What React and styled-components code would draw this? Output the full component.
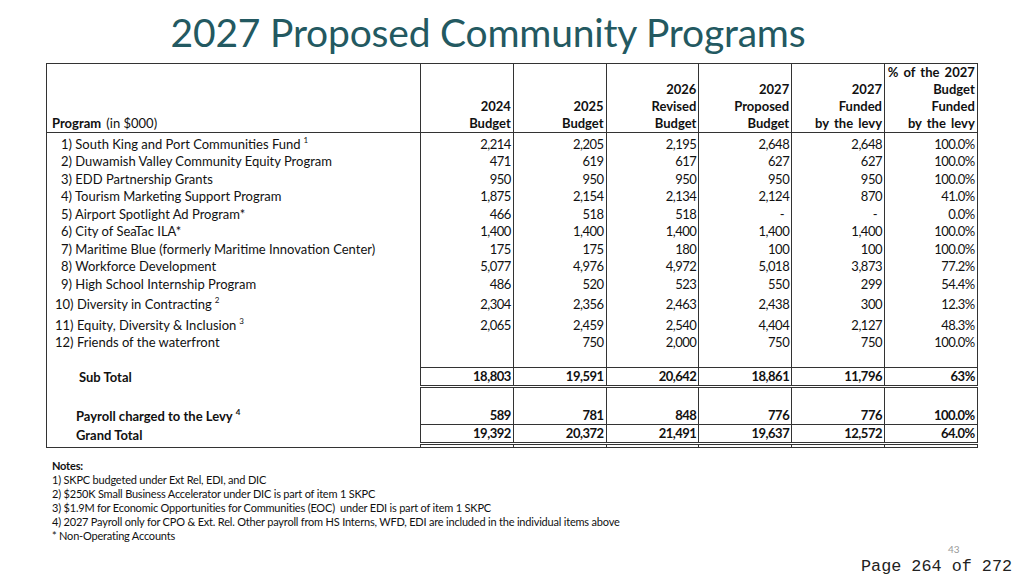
import React from "react";
import styled, { createGlobalStyle } from "styled-components";

const Global = createGlobalStyle`
  html, body { margin: 0; padding: 0; background: #fff; }
`;

const Page = styled.div`
  position: relative;
  width: 1024px;
  height: 576px;
  overflow: hidden;
  background: #fff;
  font-family: Lato, "Open Sans", sans-serif;
  color: #111;
`;

const Title = styled.h1`
  margin: 0;
  padding: 9px 48px 0 0;
  height: 54px;
  box-sizing: border-box;
  font-family: Lato, "Open Sans", sans-serif;
  font-weight: 400;
  font-size: 39px;
  line-height: 46px;
  text-align: center;
  color: #235961;
  letter-spacing: -0.2px;
`;

const Table = styled.table`
  margin: 9px 0 0 46px;
  width: 931px;
  table-layout: fixed;
  border-collapse: collapse;
  border: 1px solid #333;
  font-size: 13px;
`;

const HeadCell = styled.th`
  padding: 0 2px 0 ${(p) => (p.$first ? 5 : 0)}px;
  height: 68px;
  vertical-align: bottom;
  text-align: ${(p) => (p.$first ? "left" : "right")};
  font-weight: 700;
  line-height: 17px;
  word-spacing: 2px;
  border-right: 1px solid #333;
  border-bottom: 1px solid #333;
  white-space: nowrap;
`;

const Light = styled.span`
  font-weight: 400;
  word-spacing: 0;
`;

const Row = styled.tr`
  height: ${(p) => p.$h}px;
`;

const Label = styled.td`
  padding: 0 0 0 ${(p) => p.$indent}px;
  vertical-align: bottom;
  line-height: 17px;
  white-space: nowrap;
  font-weight: ${(p) => (p.$bold ? 700 : 400)};
  border-right: 1px solid #333;
`;

const rules = {
  none: "none",
  single: "1px solid #333",
  double: "3px double #333",
};

const Num = styled.td`
  padding: 0 2px 0 0;
  vertical-align: bottom;
  text-align: right;
  line-height: 17px;
  white-space: nowrap;
  letter-spacing: -0.5px;
  font-weight: ${(p) => (p.$bold ? 700 : 400)};
  border-right: 1px solid #333;
  border-bottom: ${(p) => rules[p.$rule || "none"]};
`;

const Dash = styled.span`
  padding-right: 5px;
`;

const Sup = styled.sup`
  font-size: 8px;
  line-height: 0;
  vertical-align: 6px;
  margin-left: 3px;
`;

const Notes = styled.div`
  margin: 11px 0 0 52px;
  font-size: 11px;
  line-height: 14px;
  letter-spacing: -0.2px;
  color: #111;
`;

const NotesHead = styled.div`
  font-weight: 700;
`;

const PageNo = styled.div`
  position: absolute;
  left: 948px;
  top: 544px;
  font-size: 10px;
  line-height: 11px;
  color: #999;
`;

const Stamp = styled.div`
  position: absolute;
  left: 861px;
  top: 558px;
  font-family: "Liberation Mono", "Courier New", monospace;
  font-size: 16.8px;
  line-height: 17px;
  color: #222;
`;

const rows = [
  ["1) South King and Port Communities Fund", "1", ["2,214", "2,205", "2,195", "2,648", "2,648", "100.0%"], 20],
  ["2) Duwamish Valley Community Equity Program", null, ["471", "619", "617", "627", "627", "100.0%"], 17.5],
  ["3) EDD Partnership Grants", null, ["950", "950", "950", "950", "950", "100.0%"], 17.5],
  ["4) Tourism Marketing Support Program", null, ["1,875", "2,154", "2,134", "2,124", "870", "41.0%"], 17.5],
  ["5) Airport Spotlight Ad Program*", null, ["466", "518", "518", "-", "-", "0.0%"], 17.5],
  ["6) City of SeaTac ILA*", null, ["1,400", "1,400", "1,400", "1,400", "1,400", "100.0%"], 17.5],
  ["7) Maritime Blue (formerly Maritime Innovation Center)", null, ["175", "175", "180", "100", "100", "100.0%"], 17.5],
  ["8) Workforce Development", null, ["5,077", "4,976", "4,972", "5,018", "3,873", "77.2%"], 17.5],
  ["9) High School Internship Program", null, ["486", "520", "523", "550", "299", "54.4%"], 17.5],
  ["10) Diversity in Contracting", "2", ["2,304", "2,356", "2,463", "2,438", "300", "12.3%"], 20.5],
  ["11) Equity, Diversity & Inclusion", "3", ["2,065", "2,459", "2,540", "4,404", "2,127", "48.3%"], 20.5],
  ["12) Friends of the waterfront", null, ["", "750", "2,000", "750", "750", "100.0%"], 17.5],
];

const heads = [
  ["2024", "Budget"],
  ["2025", "Budget"],
  ["2026", "Revised", "Budget"],
  ["2027", "Proposed", "Budget"],
  ["2027", "Funded", "by the levy"],
  ["% of the 2027", "Budget", "Funded", "by the levy"],
];

function NumCells({ values, bold, rule }) {
  return values.map((v, i) => (
    <Num key={i} $bold={bold} $rule={rule}>
      {v === "-" ? <Dash>-</Dash> : v}
    </Num>
  ));
}

const blank = ["", "", "", "", "", ""];

export default function App() {
  return (
    <Page>
      <Global />
      <Title>2027 Proposed Community Programs</Title>
      <Table>
        <colgroup>
          <col style={{ width: 374 }} />
          {heads.map((_, i) => (
            <col key={i} style={{ width: 92.8 }} />
          ))}
        </colgroup>
        <thead>
          <tr>
            <HeadCell $first>
              Program <Light>(in $000)</Light>
            </HeadCell>
            {heads.map((h, i) => (
              <HeadCell key={i}>
                {h.map((line, j) => (
                  <React.Fragment key={j}>
                    {j > 0 && <br />}
                    {line}
                  </React.Fragment>
                ))}
              </HeadCell>
            ))}
          </tr>
        </thead>
        <tbody>
          {rows.map(([label, sup, vals, h], i) => (
            <Row key={i} $h={h}>
              <Label $indent={i < 9 ? 14 : 8}>
                {label}
                {sup && <Sup>{sup}</Sup>}
              </Label>
              <NumCells values={vals} />
            </Row>
          ))}
          <Row $h={16}>
            <Label $indent={0} />
            <NumCells values={blank} rule="single" />
          </Row>
          <Row $h={17}>
            <Label $indent={32} $bold>
              Sub Total
            </Label>
            <NumCells
              values={["18,803", "19,591", "20,642", "18,861", "11,796", "63%"]}
              bold
              rule="double"
            />
          </Row>
          <Row $h={21}>
            <Label $indent={0} />
            <NumCells values={blank} />
          </Row>
          <Row $h={17}>
            <Label $indent={29} $bold>
              Payroll charged to the Levy<Sup>4</Sup>
            </Label>
            <NumCells
              values={["589", "781", "848", "776", "776", "100.0%"]}
              bold
              rule="single"
            />
          </Row>
          <Row $h={17}>
            <Label $indent={29} $bold>
              Grand Total
            </Label>
            <NumCells
              values={["19,392", "20,372", "21,491", "19,637", "12,572", "64.0%"]}
              bold
              rule="double"
            />
          </Row>
          <Row $h={4}>
            <Label $indent={0} />
            <NumCells values={blank} />
          </Row>
        </tbody>
      </Table>
      <Notes>
        <NotesHead>Notes:</NotesHead>
        <div>1) SKPC budgeted under Ext Rel, EDI, and DIC</div>
        <div>2) $250K Small Business Accelerator under DIC is part of item 1 SKPC</div>
        <div>3) $1.9M for Economic Opportunities for Communities (EOC)&nbsp; under EDI is part of item 1 SKPC</div>
        <div>
          4) 2027 Payroll only for CPO &amp; Ext. Rel. Other payroll from HS Interns, WFD, EDI are included in the individual items above
        </div>
        <div>* Non-Operating Accounts</div>
      </Notes>
      <PageNo>43</PageNo>
      <Stamp>Page 264 of 272</Stamp>
    </Page>
  );
}
